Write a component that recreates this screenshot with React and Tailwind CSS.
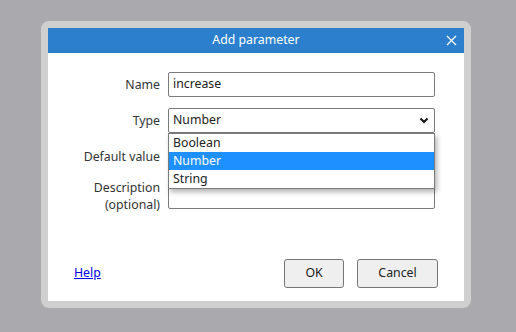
import React from "react";

function Row({ label, children, className = "" }) {
  return (
    <div className={`flex items-center ${className}`}>
      <div className="w-[112px] text-right leading-[17px] text-[#333]">{label}</div>
      <div className="ml-[8px] w-[267px] relative">{children}</div>
    </div>
  );
}

export default function App() {
  return (
    <div
      className="w-[516px] h-[332px] bg-[#aaa9ae] pt-[21px] pl-[41px] text-[12.3px]"
      style={{ fontFamily: '"Noto Sans", "Open Sans", sans-serif' }}
    >
      {/* frame */}
      <div className="w-[430px] h-[287px] rounded-[8px] bg-[#cfcfcf] p-[7px]">
        <div className="h-full bg-white flex flex-col">
          {/* header */}
          <div className="h-[25px] bg-[#2b7fcc] text-white flex items-center justify-center relative">
            <span>Add parameter</span>
            <svg className="absolute right-[7px] top-[7px]" width="11" height="11" viewBox="0 0 11 11">
              <path d="M1 1L10 10M10 1L1 10" stroke="white" strokeWidth="1.3" />
            </svg>
          </div>

          {/* form */}
          <div className="pt-[19px] flex flex-col">
            <Row label="Name">
              <div className="h-[25px] border border-[#7a7a7a] rounded-[2px] px-[4px] flex items-center text-[#222]">
                increase
              </div>
            </Row>
            <Row label="Type" className="mt-[11px]">
              <div className="h-[25px] border border-[#7a7a7a] rounded-[2px] px-[4px] flex items-center justify-between text-[#222]">
                <span>Number</span>
                <svg width="10" height="7" viewBox="0 0 10 7" className="mr-[1px]">
                  <path d="M1.5 1.5L5 5L8.5 1.5" stroke="#111" strokeWidth="2" fill="none" />
                </svg>
              </div>
              {/* open dropdown list */}
              <div className="absolute left-0 top-[25px] w-[267px] z-10 bg-white border border-[#7a7a7a] shadow-[2px_3px_5px_rgba(0,0,0,0.3)] text-[#222]">
                <div className="h-[18px] px-[4px] leading-[18px]">Boolean</div>
                <div className="h-[18px] px-[4px] leading-[18px] bg-[#1e90ff] text-white">Number</div>
                <div className="h-[18px] px-[4px] leading-[18px]">String</div>
              </div>
            </Row>
            <Row label="Default value" className="mt-[11px]">
              <div className="h-[25px] border border-[#7a7a7a] rounded-[2px]" />
            </Row>
            <Row
              label={
                <>
                  Description
                  <br />
                  (optional)
                </>
              }
              className="mt-[10px]"
            >
              <div className="h-[26px] border border-[#7a7a7a] rounded-[2px]" />
            </Row>
          </div>

          {/* footer */}
          <div className="mt-auto mb-[13px] flex items-center">
            <a href="#" className="ml-[26px] text-[#0000ee] underline">Help</a>
            <div className="ml-auto mr-[26px] flex gap-[13px]">
              <button className="w-[60px] h-[29px] bg-[#efefef] border border-[#767676] rounded-[3px] text-[#222]">OK</button>
              <button className="w-[81px] h-[29px] bg-[#efefef] border border-[#767676] rounded-[3px] text-[#222]">Cancel</button>
            </div>
          </div>
        </div>
      </div>
    </div>
  );
}
